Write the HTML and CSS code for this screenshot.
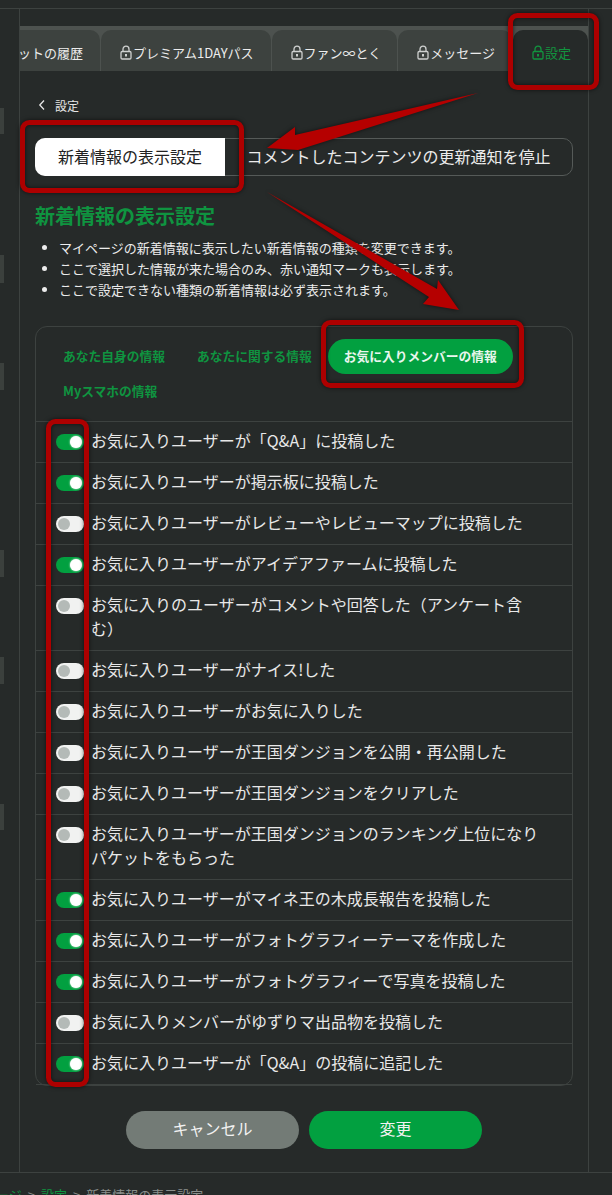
FILE: index.html
```html
<!DOCTYPE html>
<html lang="ja">
<head>
<meta charset="utf-8">
<title>新着情報の表示設定</title>
<link rel="stylesheet" href="styles.css">
</head>
<body>
<svg width="0" height="0" class="defs" aria-hidden="true">
  <symbol id="lock" viewBox="0 0 12 15">
    <path d="M3 6.5V4.2a3 3 0 0 1 6 0v2.3" fill="none" stroke="currentColor" stroke-width="1.3"/>
    <rect x="1" y="6.5" width="10" height="7.5" rx="1.2" fill="none" stroke="currentColor" stroke-width="1.3"/>
    <rect x="5" y="9" width="2" height="2.5" fill="currentColor"/>
  </symbol>
</svg>
<div class="page">
  <div class="columns">
    <aside class="rail">
      <span class="block b1"></span><span class="block b2"></span><span class="block b3"></span>
      <span class="block b4"></span><span class="block b5"></span><span class="block b6"></span>
    </aside>
    <main class="main">
      <nav class="tabs">
        <a class="tab">パケットの履歴</a>
        <a class="tab"><svg class="lock"><use href="#lock"/></svg>プレミアム1DAYパス</a>
        <a class="tab tab-fan"><svg class="lock"><use href="#lock"/></svg>ファン∞とく</a>
        <a class="tab"><svg class="lock"><use href="#lock"/></svg>メッセージ</a>
        <a class="tab active"><svg class="lock"><use href="#lock"/></svg>設定</a>
      </nav>
      <div class="content">
        <a class="back"><svg class="chev" viewBox="0 0 8 12"><path d="M6 1.5 1.8 6 6 10.5" fill="none" stroke="currentColor" stroke-width="1.3"/></svg>設定</a>
        <div class="segment">
          <button class="seg seg-on">新着情報の表示設定</button>
          <button class="seg seg-off">コメントしたコンテンツの更新通知を停止</button>
        </div>
        <h1 class="title">新着情報の表示設定</h1>
        <ul class="notes">
          <li>マイページの新着情報に表示したい新着情報の種類を変更できます。</li>
          <li>ここで選択した情報が来た場合のみ、赤い通知マークも表示します。</li>
          <li>ここで設定できない種類の新着情報は必ず表示されます。</li>
        </ul>
        <section class="panel">
          <div class="pills">
            <a class="pill">あなた自身の情報</a>
            <a class="pill">あなたに関する情報</a>
            <a class="pill pill-on">お気に入りメンバーの情報</a>
            <a class="pill">Myスマホの情報</a>
          </div>
          <div class="row"><span class="toggle on"></span><span class="label">お気に入りユーザーが「Q&amp;A」に投稿した</span></div>
          <div class="row"><span class="toggle on"></span><span class="label">お気に入りユーザーが掲示板に投稿した</span></div>
          <div class="row"><span class="toggle"></span><span class="label">お気に入りユーザーがレビューやレビューマップに投稿した</span></div>
          <div class="row"><span class="toggle on"></span><span class="label">お気に入りユーザーがアイデアファームに投稿した</span></div>
          <div class="row"><span class="toggle"></span><span class="label">お気に入りのユーザーがコメントや回答した（アンケート含む）</span></div>
          <div class="row"><span class="toggle"></span><span class="label">お気に入りユーザーがナイス!した</span></div>
          <div class="row"><span class="toggle"></span><span class="label">お気に入りユーザーがお気に入りした</span></div>
          <div class="row"><span class="toggle"></span><span class="label">お気に入りユーザーが王国ダンジョンを公開・再公開した</span></div>
          <div class="row"><span class="toggle"></span><span class="label">お気に入りユーザーが王国ダンジョンをクリアした</span></div>
          <div class="row"><span class="toggle"></span><span class="label">お気に入りユーザーが王国ダンジョンのランキング上位になりパケットをもらった</span></div>
          <div class="row"><span class="toggle on"></span><span class="label">お気に入りユーザーがマイネ王の木成長報告を投稿した</span></div>
          <div class="row"><span class="toggle on"></span><span class="label">お気に入りユーザーがフォトグラフィーテーマを作成した</span></div>
          <div class="row"><span class="toggle on"></span><span class="label">お気に入りユーザーがフォトグラフィーで写真を投稿した</span></div>
          <div class="row"><span class="toggle"></span><span class="label">お気に入りメンバーがゆずりマ出品物を投稿した</span></div>
          <div class="row"><span class="toggle on"></span><span class="label">お気に入りユーザーが「Q&amp;A」の投稿に追記した</span></div>
        </section>
        <div class="actions">
          <button class="btn btn-cancel">キャンセル</button>
          <button class="btn btn-ok">変更</button>
        </div>
      </div>
    </main>
  </div>
  <footer class="crumbs">
    <a class="crumb-link">ページ</a><span class="sep">&gt;</span><a class="crumb-link">設定</a><span class="sep">&gt;</span><span>新着情報の表示設定</span>
  </footer>
</div>
<svg class="marks" viewBox="0 0 612 1195" aria-hidden="true">
  <rect class="frame" x="510.5" y="15.5" width="86" height="72" rx="7"/>
  <rect class="frame" x="22.5" y="122.5" width="219" height="68" rx="7"/>
  <rect class="frame" x="323.5" y="322.5" width="198" height="63" rx="7"/>
  <rect class="frame" x="48.5" y="421.5" width="38" height="663" rx="7"/>
  <polygon class="arrow" points="478,93 295,135 295,127 267,148 298,150"/>
  <polygon class="arrow" points="267,192 437,289 438,280 459,310 423,304 429,297"/>
</svg>
</body>
</html>
```
FILE: styles.css
```css
* { box-sizing: border-box; }
html, body { margin: 0; padding: 0; }
body {
  position: relative;
  height: 1195px;
  overflow: hidden;
  background: #262a29;
  color: #ececec;
  font-family: "Noto Sans CJK JP", "Noto Sans", sans-serif;
}
.defs { position: absolute; }
.page { padding-top: 8px; height: 1195px; }
.columns {
  display: flex;
  height: 1165px;
  border-top: 1px solid #3d4240;
  border-bottom: 1px solid #3d4240;
}
.rail { width: 19px; display: flex; flex-direction: column; align-items: flex-start; }
.block { display: block; width: 4px; background: #3b403d; }
.b1 { margin-top: 99px; height: 26px; }
.b2 { margin-top: 121px; height: 28px; }
.b3 { margin-top: 80px; height: 27px; }
.b4 { margin-top: 160px; height: 27px; }
.b5 { margin-top: 80px; height: 27px; }
.b6 { margin-top: 120px; height: 26px; }
.main {
  width: 570px;
  border-left: 1px solid #3d4240;
  border-right: 1px solid #3d4240;
  padding-top: 17px;
}
.tabs {
  display: flex;
  justify-content: flex-end;
  gap: 1px;
  height: 45px;
  padding-top: 4px;
  overflow: hidden;
  background: #4d524f;
}
.tab {
  flex: none;
  display: flex;
  align-items: center;
  justify-content: center;
  height: 41px;
  padding: 4px 17px 0 19px;
  background: #3d423f;
  border-radius: 10px 10px 0 0;
  color: #ececec;
  font-size: 13px;
  white-space: nowrap;
}
.tab-fan { padding-right: 16px; }
.tab.active { background: #262a29; color: #12943f; }
.lock { width: 12px; height: 15px; margin-right: 1px; color: #cfd1d0; }
.active .lock { color: #12943f; }
.content { padding: 24px 15px 0; }
.back { display: flex; align-items: center; height: 20px; padding-left: 3px; font-size: 12px; color: #e6e6e6; }
.chev { width: 8px; height: 12px; margin-right: 9px; }
.segment {
  display: flex;
  height: 38px;
  margin-top: 23px;
  border: 1px solid #555a58;
  border-radius: 10px;
}
.seg {
  border: 0;
  padding: 0 0 2px;
  font: inherit;
  font-size: 16px;
  background: none;
  color: #ececec;
}
.seg-on { width: 190px; margin: -1px 0 -1px -1px; background: #fff; color: #222; border-radius: 10px 0 0 10px; }
.seg-off { flex: 1; white-space: nowrap; }
.title { margin: 26px 0 0; font-size: 20px; line-height: 28px; font-weight: 700; color: #0f9440; }
.notes { margin: 7px 0 0; padding: 0 0 0 24px; font-size: 13px; line-height: 21px; }
.panel { margin-top: 26px; border: 1px solid #3d4240; border-radius: 12px; }
.pills { display: flex; flex-wrap: wrap; padding: 12px 11px; }
.pill {
  display: flex;
  align-items: center;
  height: 35px;
  padding: 0 16px 2px;
  border-radius: 18px;
  font-size: 12.75px;
  font-weight: 700;
  color: #0f9440;
}
.pill-on { background: #02a040; color: #e9f6ee; }
.row {
  display: flex;
  align-items: flex-start;
  gap: 7px;
  padding: 8px 30px 8px 20px;
  border-top: 1px solid #3d4240;
  font-size: 16px;
  line-height: 24px;
  color: #e8e8e8;
}
.row:last-child { border-bottom: 1px solid #3d4240; }
.label { margin: -2px 0 2px; }
.toggle {
  flex: none;
  position: relative;
  width: 28px;
  height: 16px;
  margin-top: 4px;
  border-radius: 8px;
  background: #f1f2f1;
}
.toggle::after {
  content: "";
  position: absolute;
  top: 2px;
  left: 2px;
  width: 12px;
  height: 12px;
  border-radius: 50%;
  background: #b4bab7;
}
.toggle.on { background: #02a040; }
.toggle.on::after { left: 14px; background: #fff; box-shadow: 0 0 2px #fff; }
.actions { display: flex; justify-content: center; gap: 10px; margin-top: 25px; }
.btn {
  width: 173px;
  height: 38px;
  border: 0;
  border-radius: 19px;
  padding: 0 0 4px;
  font: inherit;
  font-size: 16px;
  color: #f2f2f2;
}
.btn-cancel { background: #737b76; }
.btn-ok { background: #02a040; }
.crumbs {
  display: flex;
  margin-left: -17px;
  padding-top: 12px;
  font-size: 13px;
  line-height: 20px;
  color: #8a8f8c;
}
.crumb-link { color: #0f9440; }
.sep { margin: 0 6px; }
.marks {
  position: absolute;
  top: 0;
  left: 0;
  width: 612px;
  height: 1195px;
  pointer-events: none;
  filter: drop-shadow(0 0 2px rgba(0, 0, 0, .6));
}
.frame { fill: none; stroke: #ad0000; stroke-width: 5; }
.arrow { fill: #b50000; }
```
